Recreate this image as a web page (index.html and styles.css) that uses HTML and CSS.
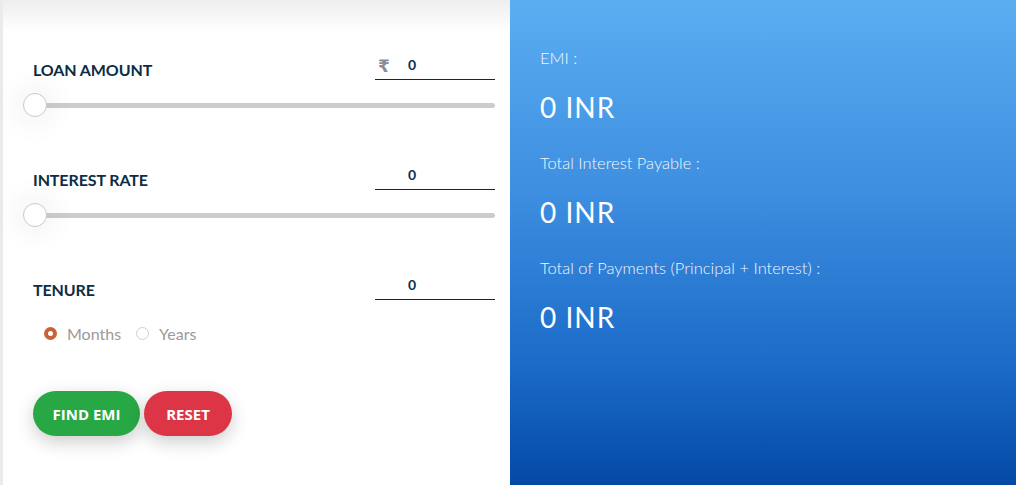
FILE: index.html
```html
<!DOCTYPE html>
<html lang="en">
<head>
<meta charset="utf-8">
<title>EMI Calculator</title>
<link rel="stylesheet" href="styles.css">
</head>
<body>
<div class="calc">
  <section class="form-panel">
    <div class="field">
      <div class="field-head">
        <span class="field-label">LOAN AMOUNT</span>
        <div class="amount">
          <span class="rupee">₹</span>
          <input class="amount-input" type="text" value="0">
        </div>
      </div>
      <div class="slider"><span class="thumb"></span></div>
    </div>
    <div class="field">
      <div class="field-head">
        <span class="field-label">INTEREST RATE</span>
        <div class="amount">
          <input class="amount-input" type="text" value="0">
        </div>
      </div>
      <div class="slider"><span class="thumb"></span></div>
    </div>
    <div class="field field-short">
      <div class="field-head">
        <span class="field-label">TENURE</span>
        <div class="amount">
          <input class="amount-input" type="text" value="0">
        </div>
      </div>
    </div>
    <div class="radios">
      <label class="radio"><span class="dot dot-on"></span>Months</label>
      <label class="radio"><span class="dot"></span>Years</label>
    </div>
    <div class="buttons">
      <button class="btn btn-green">FIND EMI</button>
      <button class="btn btn-red">RESET</button>
    </div>
  </section>
  <section class="result-panel">
    <div class="result">
      <div class="result-label">EMI :</div>
      <div class="result-value">0 INR</div>
    </div>
    <div class="result">
      <div class="result-label">Total Interest Payable :</div>
      <div class="result-value">0 INR</div>
    </div>
    <div class="result">
      <div class="result-label">Total of Payments (Principal + Interest) :</div>
      <div class="result-value">0 INR</div>
    </div>
  </section>
</div>
</body>
</html>
```
FILE: styles.css
```css
* { box-sizing: border-box; }
html, body { margin: 0; padding: 0; }
body {
  font-family: "Lato", "Liberation Sans", sans-serif;
  background: #fff;
}
.calc {
  display: flex;
  height: 485px;
  width: 1016px;
  overflow: hidden;
}
.form-panel {
  width: 510px;
  flex: none;
  border-left: 3px solid #ebebeb;
  background: linear-gradient(#eeeeee 0, #ffffff 32px, #ffffff 100%);
  padding: 50px 15px 0 30px;
}
.field { height: 110px; }
.field-short { height: 30px; }
.field-head {
  display: flex;
  justify-content: space-between;
  align-items: flex-end;
  height: 30px;
}
.field-label {
  font-weight: 700;
  font-size: 16px;
  line-height: 20px;
  color: #0c2d44;
  letter-spacing: -0.1px;
}
.amount {
  position: relative;
  width: 120px;
  height: 30px;
  border-bottom: 1px solid #0e2a38;
}
.rupee {
  position: absolute;
  left: 3px;
  top: 6px;
  font-family: "DejaVu Sans", sans-serif;
  font-size: 17px;
  font-weight: 700;
  color: #8a8d93;
}
.amount-input {
  width: 100%;
  height: 29px;
  border: none;
  outline: none;
  background: transparent;
  padding: 0 0 0 33px;
  font-family: "Lato", sans-serif;
  font-weight: 700;
  font-size: 14px;
  color: #0d3050;
}
.slider {
  position: relative;
  margin: 23px 0 0 0;
  height: 5px;
  border-radius: 3px;
  background: #cccccc;
}
.thumb {
  position: absolute;
  left: -10px;
  top: -10px;
  width: 24px;
  height: 24px;
  border-radius: 50%;
  background: #fff;
  border: 1px solid #c8c8c8;
  box-shadow: 0 0 24px 12px rgba(0, 0, 0, 0.035);
}
.radios {
  display: flex;
  align-items: center;
  height: 20px;
  margin: 23px 0 0 11px;
  gap: 15px;
}
.radio {
  display: flex;
  align-items: center;
  font-size: 16px;
  color: #9a9a9a;
  font-weight: 400;
}
.dot {
  width: 13px;
  height: 13px;
  border-radius: 50%;
  border: 1px solid #cfcfcf;
  background: #fff;
  margin-right: 10px;
}
.dot-on {
  border: 4px solid #c9623a;
  background: #fff;
}
.buttons {
  display: flex;
  gap: 4px;
  margin-top: 48px;
}
.btn {
  height: 45px;
  border: none;
  border-radius: 23px;
  color: #fff;
  font-family: "Open Sans", "Lato", sans-serif;
  font-weight: 700;
  font-size: 15px;
  padding: 0;
  box-shadow: 0 6px 18px rgba(0, 0, 0, 0.2);
}
.btn-green { background: #28a745; width: 107px; }
.btn-red { background: #dc3545; width: 88px; }
.result-panel {
  flex: 1;
  background: linear-gradient(#5aaef1 0%, #3d8ee0 40%, #1b6bc8 75%, #0449a6 100%);
  padding: 48px 30px 0 30px;
  color: #fff;
}
.result { margin-bottom: 29px; }
.result-label {
  font-size: 16.5px;
  font-weight: 300;
  line-height: 20px;
  color: #f2f7fd;
  margin-bottom: 22px;
}
.result-value {
  font-size: 28px;
  line-height: 34px;
  font-weight: 400;
  letter-spacing: 1px;
}
```
